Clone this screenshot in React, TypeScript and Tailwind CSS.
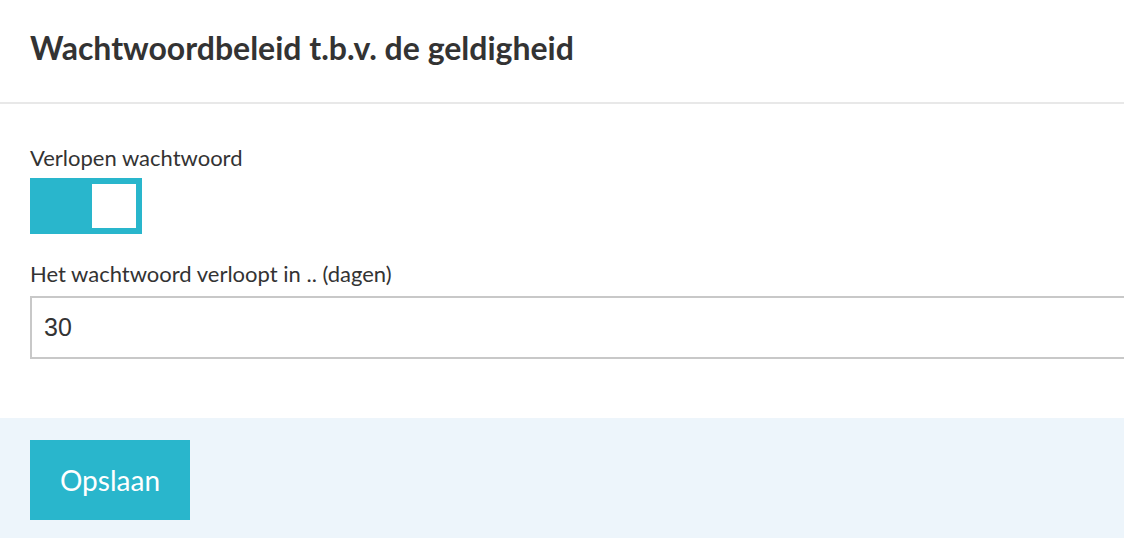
export default function App() {
  return (
    <div className="w-[1124px] h-[538px] overflow-hidden bg-white text-[#333] font-['Lato',sans-serif]">
      {/* Header */}
      <div className="h-[104px] border-b-2 border-[#e8e8e8] px-[30px] flex items-center">
        <h1 className="text-[32px] font-bold leading-none -mt-[6px]">Wachtwoordbeleid t.b.v. de geldigheid</h1>
      </div>

      {/* Body */}
      <div className="px-[30px] pt-[40px] h-[314px]">
        <label className="block text-[22px] leading-[28px]">Verlopen wachtwoord</label>
        <button className="mt-[6px] w-[112px] h-[56px] bg-[#29b6cc] flex items-center justify-end pr-[6px]">
          <span className="block w-[44px] h-[44px] bg-white" />
        </button>
        <label className="block mt-[26px] text-[22px] leading-[28px]">Het wachtwoord verloopt in .. (dagen)</label>
        <input
          type="text"
          defaultValue="30"
          className="mt-[8px] w-[1120px] h-[63px] border-2 border-[#c8c8c8] px-[12px] text-[25px] text-[#333] font-['Liberation_Sans',Arial,sans-serif] outline-none"
        />
      </div>

      {/* Footer */}
      <div className="h-[120px] bg-[#edf5fb] px-[30px] pt-[22px]">
        <button className="w-[160px] h-[80px] bg-[#29b6cc] text-white text-[28px]">Opslaan</button>
      </div>
    </div>
  );
}
